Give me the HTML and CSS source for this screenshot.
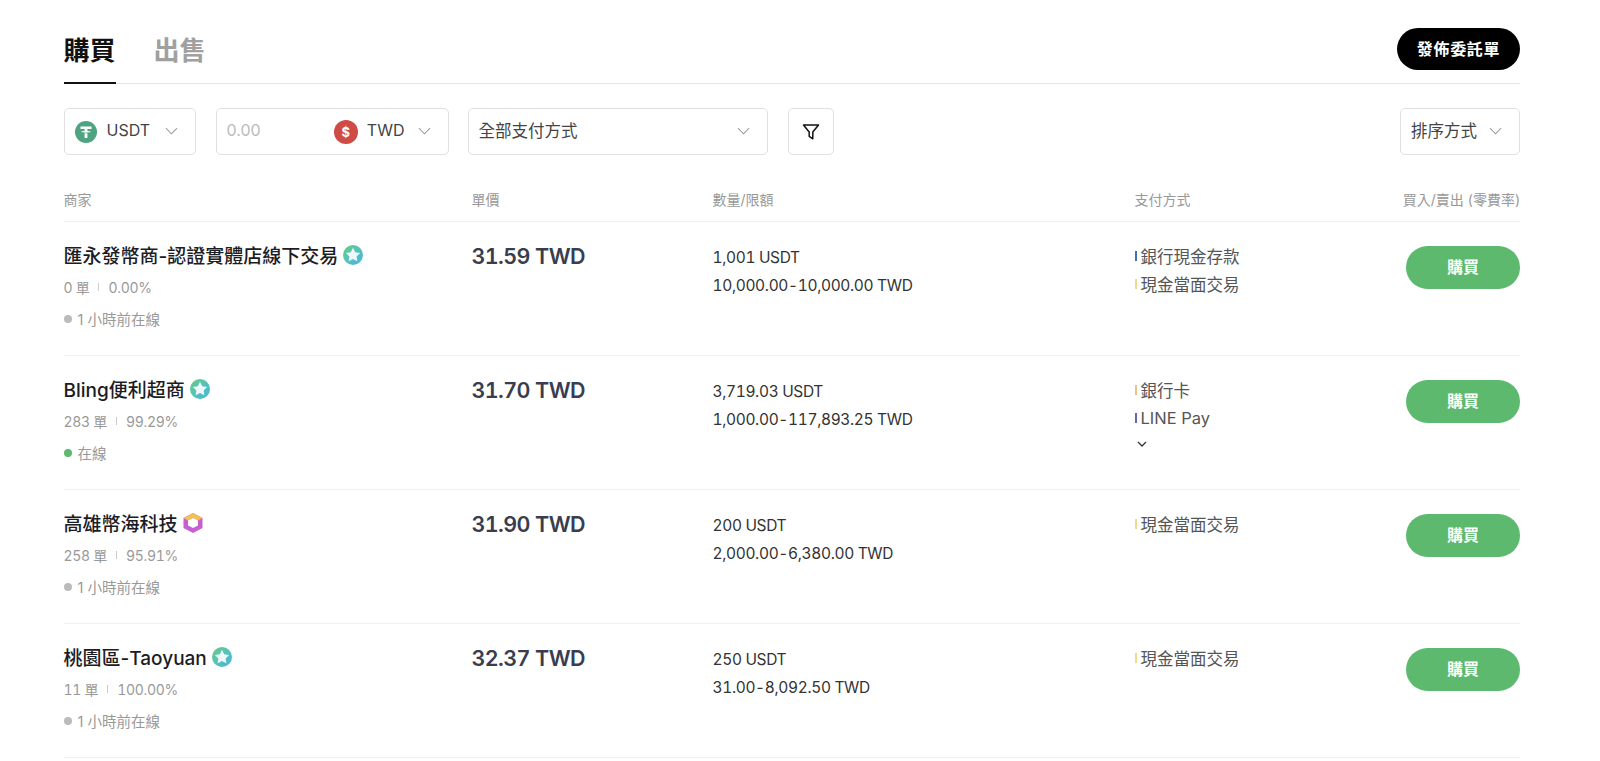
FILE: index.html
```html
<!DOCTYPE html>
<html lang="zh-Hant">
<head>
  <meta charset="UTF-8">
  <meta name="viewport" content="width=device-width, initial-scale=1.0">
  <title>購買</title>
  <link rel="stylesheet" href="styles.css">
</head>
<body>
  <div class="page">
    <div class="tabs">
      <div class="tab-list">
        <div class="tab active">購買</div>
        <div class="tab">出售</div>
      </div>
      <button class="post-btn">發佈委託單</button>
    </div>

    <div class="filters">
      <div class="box box-coin">
        <svg class="coin" viewBox="0 0 22 22"><circle cx="11" cy="11" r="11" fill="#50a381"/><path d="M5.500 5.500h11v2.600h-4.100v2c2 .1 3.600.5 3.600 1s-1.600.9-3.600 1v4.900h-2.800v-4.900c-2-.1-3.600-.5-3.600-1s1.600-.9 3.600-1v-2H5.500z" fill="#fff"/><path d="M5.800 11.100c1 .6 3 .8 5.200.8s4.200-.2 5.200-.8" fill="none" stroke="#50a381" stroke-width=".8"/></svg>
        <span class="box-text">USDT</span>
        <svg class="chev" viewBox="0 0 14 8"><path d="M1 1l6 6 6-6"/></svg>
      </div>
      <div class="box box-amount">
        <span class="placeholder">0.00</span>
        <span class="coin coin-twd">$</span>
        <span class="box-text">TWD</span>
        <svg class="chev" viewBox="0 0 14 8"><path d="M1 1l6 6 6-6"/></svg>
      </div>
      <div class="box box-pay">
        <span class="box-text text-cjk">全部支付方式</span>
        <svg class="chev" viewBox="0 0 14 8"><path d="M1 1l6 6 6-6"/></svg>
      </div>
      <div class="box box-filter">
        <svg class="funnel" viewBox="0 0 18 18"><path d="M1.500 2h15l-5.700 7v6.800l-3.600-2.400V9z"/></svg>
      </div>
      <div class="box box-sort">
        <span class="box-text text-cjk">排序方式</span>
        <svg class="chev" viewBox="0 0 14 8"><path d="M1 1l6 6 6-6"/></svg>
      </div>
    </div>

    <div class="row-grid table-head">
      <div>商家</div>
      <div>單價</div>
      <div>數量/限額</div>
      <div>支付方式</div>
      <div>買入/賣出 (零費率)</div>
    </div>

    <div class="row-grid row">
      <div>
        <div class="name">匯永發幣商-認證實體店線下交易
          <svg class="badge" viewBox="0 0 20 20"><use href="#badge-star"/></svg>
        </div>
        <div class="stats"><span>0 單</span><i class="sep"></i><span>0.00%</span></div>
        <div class="status"><i class="dot"></i>1 小時前在線</div>
      </div>
      <div class="price">31.59 TWD</div>
      <div class="amount">
        <div>1,001 USDT</div>
        <div>10,000.00-10,000.00 TWD</div>
      </div>
      <div class="pay">
        <div class="pay-item"><i class="bar bar-blue"></i>銀行現金存款</div>
        <div class="pay-item"><i class="bar bar-yellow"></i>現金當面交易</div>
      </div>
      <div class="action"><button class="buy-btn">購買</button></div>
    </div>

    <div class="row-grid row">
      <div>
        <div class="name">Bling便利超商
          <svg class="badge" viewBox="0 0 20 20"><use href="#badge-star"/></svg>
        </div>
        <div class="stats"><span>283 單</span><i class="sep"></i><span>99.29%</span></div>
        <div class="status"><i class="dot dot-on"></i>在線</div>
      </div>
      <div class="price">31.70 TWD</div>
      <div class="amount">
        <div>3,719.03 USDT</div>
        <div>1,000.00-117,893.25 TWD</div>
      </div>
      <div class="pay">
        <div class="pay-item"><i class="bar bar-orange"></i>銀行卡</div>
        <div class="pay-item"><i class="bar bar-purple"></i>LINE Pay</div>
        <svg class="more" viewBox="0 0 10 6"><path d="M1 1l4 4 4-4"/></svg>
      </div>
      <div class="action"><button class="buy-btn">購買</button></div>
    </div>

    <div class="row-grid row">
      <div>
        <div class="name">高雄幣海科技
          <svg class="badge" viewBox="0 0 20 20">
            <path d="M10 0l9.500 5v10L10 20 .5 15V5z" fill="#c75fd3"/>
            <path d="M.5 5L10 0l9.500 5-4.500 2.500L10 5 5 7.500z" fill="#f2c14e"/>
            <path d="M10 5l5 2.500v5L10 15l-5-2.500v-5z" fill="#fff"/>
          </svg>
        </div>
        <div class="stats"><span>258 單</span><i class="sep"></i><span>95.91%</span></div>
        <div class="status"><i class="dot"></i>1 小時前在線</div>
      </div>
      <div class="price">31.90 TWD</div>
      <div class="amount">
        <div>200 USDT</div>
        <div>2,000.00-6,380.00 TWD</div>
      </div>
      <div class="pay">
        <div class="pay-item"><i class="bar bar-yellow"></i>現金當面交易</div>
      </div>
      <div class="action"><button class="buy-btn">購買</button></div>
    </div>

    <div class="row-grid row">
      <div>
        <div class="name">桃園區-Taoyuan
          <svg class="badge" viewBox="0 0 20 20"><use href="#badge-star"/></svg>
        </div>
        <div class="stats"><span>11 單</span><i class="sep"></i><span>100.00%</span></div>
        <div class="status"><i class="dot"></i>1 小時前在線</div>
      </div>
      <div class="price">32.37 TWD</div>
      <div class="amount">
        <div>250 USDT</div>
        <div>31.00-8,092.50 TWD</div>
      </div>
      <div class="pay">
        <div class="pay-item"><i class="bar bar-yellow"></i>現金當面交易</div>
      </div>
      <div class="action"><button class="buy-btn">購買</button></div>
    </div>
  </div>

  <svg class="defs" width="0" height="0">
    <defs>
      <linearGradient id="star-ring" x1="0" y1="0" x2="1" y2="1">
        <stop offset="0" stop-color="#66cc7c"/>
        <stop offset=".5" stop-color="#56c3bb"/>
        <stop offset="1" stop-color="#45b3e0"/>
      </linearGradient>
      <g id="badge-star">
        <circle cx="10" cy="10" r="10" fill="url(#star-ring)"/>
        <path d="M10 2.800l2.200 4.500 4.900.7-3.500 3.400.8 4.900-4.400-2.300-4.400 2.300.8-4.900-3.500-3.400 4.900-.7z" fill="#eef8fb"/>
      </g>
    </defs>
  </svg>
</body>
</html>
```

FILE: styles.css
```css
* {
  box-sizing: border-box;
}
body {
  margin: 0;
  background-color: #fff;
  color: #333;
  font-family: Inter, "Noto Sans CJK TC", sans-serif;
  overflow: hidden;
}
.page {
  width: 1456.5px;
  margin-left: 63.5px;
  padding-top: 28px;
}
.tabs {
  display: flex;
  justify-content: space-between;
  height: 56px;
  border-bottom: 1px solid #e6e6e6;
}
.tab-list {
  display: flex;
  gap: 38px;
}
.tab {
  width: 52px;
  height: 56px;
  font-size: 26px;
  font-weight: 700;
  line-height: 46px;
  color: #a0a0a0;
}
.tab.active {
  color: #111;
  border-bottom: 2px solid #111;
}
.post-btn {
  width: 123px;
  height: 42px;
  padding: 0 0 2px;
  border: none;
  border-radius: 21px;
  background-color: #000;
  color: #fff;
  font-family: inherit;
  font-size: 16px;
  font-weight: 700;
  letter-spacing: .7px;
}
.filters {
  display: flex;
  gap: 20px;
  margin-top: 24px;
}
.box {
  display: flex;
  align-items: center;
  height: 47px;
  padding: 0 10px;
  border: 1px solid #e0e0e0;
  border-radius: 5px;
  font-size: 16px;
}
.box-text {
  margin-bottom: 4px;
  color: #444;
}
.text-cjk {
  font-size: 16.5px;
}
.box-coin {
  width: 132px;
}
.box-amount {
  width: 233px;
}
.box-pay {
  width: 300px;
  margin-left: -1px;
  justify-content: space-between;
}
.box-filter {
  width: 46px;
  justify-content: center;
  padding: 0;
}
.box-sort {
  width: 120px;
  margin-left: auto;
}
.coin {
  flex: none;
  width: 22px;
  height: 22px;
  margin-right: 10px;
}
.coin-twd {
  display: flex;
  align-items: center;
  justify-content: center;
  width: 24px;
  height: 24px;
  border-radius: 50%;
  background-color: #cf4b45;
  color: #fff;
  font-size: 13px;
  font-weight: 700;
  margin-right: 9px;
}
.placeholder {
  flex: 1;
  margin-bottom: 4px;
  color: #bbb;
}
.chev {
  flex: none;
  width: 13px;
  height: 8px;
  margin: 0 7px 2px auto;
  fill: none;
  stroke: #999;
  stroke-width: 1.100;
}
.box-amount .chev {
  margin-left: 13px;
}
.funnel {
  width: 18px;
  height: 18px;
  fill: none;
  stroke: #111;
  stroke-width: 1.500;
  stroke-linejoin: round;
}
.row-grid {
  display: grid;
  grid-template-columns: 408px 241px 422px 1fr auto;
}
.table-head {
  margin-top: 35px;
  height: 32px;
  font-size: 14px;
  color: #999;
  line-height: 20px;
  border-bottom: 1px solid #f0f0f0;
}
.row {
  height: 134px;
  padding-top: 21px;
  border-bottom: 1px solid #f0f0f0;
}
.name {
  display: flex;
  align-items: center;
  gap: 5px;
  height: 25px;
  margin-top: -1px;
  font-size: 19px;
  font-weight: 500;
  color: #1c1c24;
}
.badge {
  width: 20px;
  height: 20px;
}
.stats {
  display: flex;
  align-items: center;
  margin-top: 10px;
  height: 20px;
  font-size: 14px;
  font-variant-numeric: tabular-nums;
  letter-spacing: -.3px;
  color: #999;
}
.sep {
  width: 1px;
  height: 8px;
  margin: 0 9px;
  background-color: #ccc;
}
.status {
  display: flex;
  align-items: center;
  margin-top: 11px;
  height: 20px;
  font-size: 14.500px;
  color: #999;
}
.dot {
  width: 8px;
  height: 8px;
  margin: 2px 6px 0 0;
  border-radius: 50%;
  background-color: #bbb;
}
.dot-on {
  background-color: #5cb96e;
}
.price {
  font-size: 21.500px;
  font-weight: 600;
  font-variant-numeric: tabular-nums;
  letter-spacing: -.6px;
  line-height: 26px;
  color: #3a3d4e;
}
.amount {
  margin-top: 1px;
  font-size: 15.500px;
  font-variant-numeric: tabular-nums;
  letter-spacing: -.35px;
  line-height: 28px;
  color: #333;
}
.pay {
  margin-top: -1px;
  font-size: 16.500px;
  color: #555;
}
.pay-item {
  display: flex;
  align-items: center;
  height: 28px;
}
.bar {
  width: 2px;
  height: 10px;
  margin-right: 4px;
}
.bar-blue {
  background-color: #3f6fb5;
}
.bar-yellow {
  background-color: #f0d98a;
}
.bar-orange {
  background-color: #e8c48a;
}
.bar-purple {
  background-color: #6a62b8;
}
.more {
  display: block;
  width: 10px;
  height: 6px;
  margin: 9px 0 0 2px;
  fill: none;
  stroke: #333;
  stroke-width: 1.300;
}
.action {
  display: flex;
  justify-content: flex-end;
}
.buy-btn {
  width: 114px;
  height: 43px;
  margin-top: 3px;
  padding: 0 0 4px;
  border: none;
  border-radius: 22px;
  background-color: #5cb96e;
  color: #fff;
  font-family: inherit;
  font-size: 16px;
  font-weight: 700;
}
.defs {
  position: absolute;
}
```
